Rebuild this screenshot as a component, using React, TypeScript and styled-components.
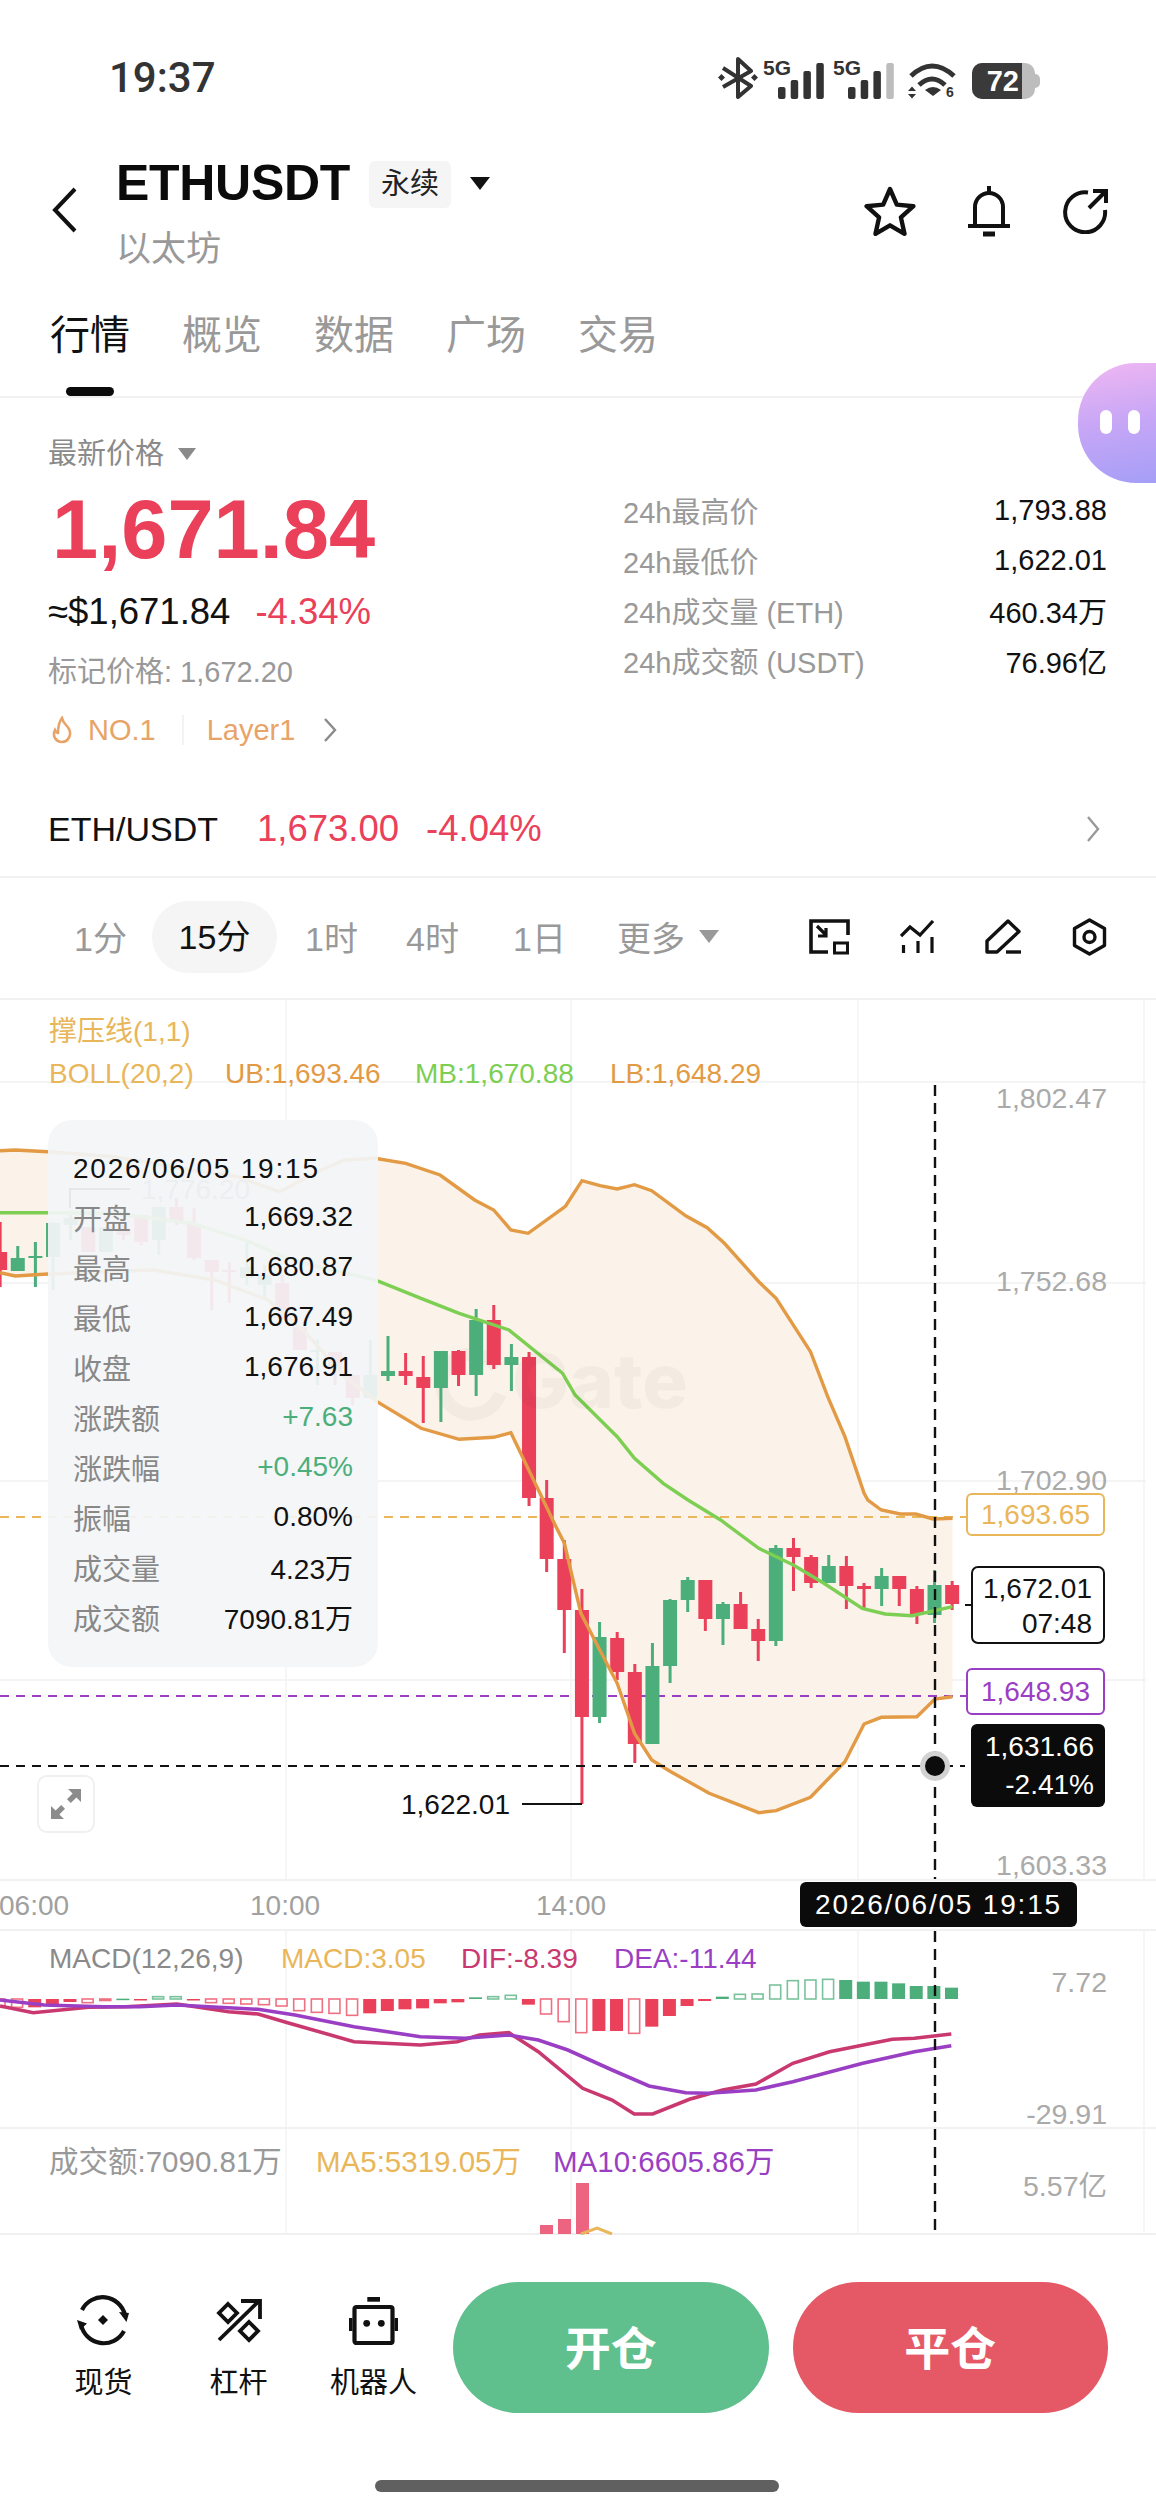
import React from "react";
import styled, { createGlobalStyle } from "styled-components";

const RED = "#ea405a";
const GREEN = "#4cae7b";
const GOLD = "#e9b659";
const ORANGE = "#e39a45";
const LIME = "#7ccf52";
const PURPLE = "#9a3fc4";
const PINK = "#c9396f";

const GlobalStyle = createGlobalStyle`
  html, body {
    margin: 0;
    padding: 0;
    background: #fff;
  }
  body {
    font-family: "Liberation Sans", "Noto Sans CJK SC", sans-serif;
    color: #111;
  }
  * {
    box-sizing: border-box;
  }
`;

// candles: [index, up?, wickTop, bodyTop, bodyBottom, wickBottom]
type Candle = [number, boolean, number, number, number, number];
const candles: Candle[] = [
  [-22, false, 1222, 1252, 1270, 1287],
  [-21, true, 1246, 1258, 1271, 1271],
  [-20, true, 1242, 1256, 1258, 1287],
  [-19, true, 1222, 1223, 1257, 1290],
  [-18, true, 1215, 1218, 1225, 1240],
  [-17, false, 1227, 1227, 1252, 1252],
  [-16, true, 1227, 1227, 1252, 1252],
  [-15, false, 1225, 1230, 1235, 1240],
  [-14, false, 1215, 1215, 1242, 1245],
  [-13, true, 1207, 1207, 1240, 1255],
  [-12, false, 1198, 1207, 1221, 1225],
  [-11, false, 1208, 1224, 1258, 1260],
  [-10, false, 1260, 1260, 1272, 1310],
  [-9, false, 1262, 1270, 1272, 1303],
  [-8, true, 1240, 1267, 1278, 1285],
  [-7, true, 1265, 1275, 1285, 1300],
  [-6, false, 1275, 1283, 1310, 1320],
  [-5, false, 1327, 1327, 1350, 1350],
  [-4, true, 1340, 1350, 1352, 1385],
  [-3, false, 1352, 1352, 1370, 1385],
  [-2, false, 1375, 1375, 1398, 1405],
  [-1, true, 1340, 1375, 1398, 1398],
  [0, true, 1336, 1371, 1376, 1381],
  [1, false, 1353, 1371, 1376, 1385],
  [2, false, 1356, 1377, 1388, 1423],
  [3, true, 1351, 1351, 1388, 1422],
  [4, false, 1350, 1351, 1375, 1386],
  [5, true, 1309, 1320, 1375, 1396],
  [6, false, 1305, 1320, 1365, 1369],
  [7, true, 1344, 1357, 1365, 1391],
  [8, false, 1352, 1357, 1498, 1506],
  [9, false, 1480, 1498, 1559, 1572],
  [10, false, 1540, 1559, 1610, 1653],
  [11, false, 1589, 1610, 1717, 1804],
  [12, true, 1622, 1637, 1717, 1723],
  [13, false, 1632, 1638, 1672, 1680],
  [14, false, 1664, 1672, 1744, 1763],
  [15, true, 1643, 1666, 1744, 1744],
  [16, true, 1599, 1600, 1666, 1683],
  [17, true, 1577, 1580, 1600, 1612],
  [18, false, 1580, 1580, 1619, 1631],
  [19, true, 1602, 1604, 1619, 1645],
  [20, false, 1592, 1604, 1629, 1629],
  [21, false, 1619, 1629, 1641, 1661],
  [22, true, 1545, 1548, 1641, 1646],
  [23, false, 1538, 1548, 1557, 1591],
  [24, false, 1555, 1557, 1583, 1588],
  [25, true, 1555, 1566, 1583, 1583],
  [26, false, 1556, 1566, 1586, 1609],
  [27, false, 1583, 1586, 1589, 1608],
  [28, true, 1568, 1576, 1589, 1606],
  [29, false, 1576, 1576, 1589, 1606],
  [30, false, 1586, 1589, 1615, 1624],
  [31, true, 1570, 1585, 1615, 1623],
  [32, false, 1581, 1585, 1604, 1610],
];
const candleX = (i: number) => 388 + 17.63 * i;

type Pt = [number, number];
// points read off the reference at its zoomed scale
const main = (ox: number, oy: number, pts: Pt[]): Pt[] =>
  pts.map(([v, w]) => [ox + v / 2.613, oy + w / 3]);
const wide = (pts: Pt[]): Pt[] => pts.map(([v, w]) => [v / 1.356, 1900 + w / 3]);
const toPath = (pts: Pt[]) =>
  pts.map(([x, y]) => `${x.toFixed(1)},${y.toFixed(1)}`).join(" ");

const upper: Pt[] = [
  ...main(0, 1000, [
    [0, 452], [40, 450], [125, 455], [300, 470], [500, 510], [620, 530], [730, 575],
    [840, 510], [900, 480], [980, 475], [1060, 490], [1150, 525], [1240, 600],
    [1290, 630], [1335, 690], [1380, 700], [1470, 625],
  ]),
  ...main(556, 1000, [
    [25, 618], [68, 542], [115, 557], [160, 567], [205, 554], [250, 572], [340, 648],
    [395, 683], [440, 730], [530, 845], [575, 895], [665, 1055], [710, 1190],
    [755, 1310], [805, 1480],
  ]),
  ...main(556, 1500, [[815, 0], [850, 30], [900, 42], [940, 42], [985, 57], [1036, 55]]),
];
const middle: Pt[] = [
  ...main(0, 1000, [
    [0, 638], [125, 638], [300, 640], [500, 670], [640, 720], [760, 780], [985, 842],
    [1100, 895], [1200, 940], [1330, 990], [1470, 1120],
  ]),
  ...main(556, 1000, [[50, 1185], [160, 1310], [205, 1375], [280, 1450]]),
  ...main(556, 1500, [
    [345, 0], [430, 60], [530, 145], [620, 195], [700, 250], [800, 325], [860, 342],
    [930, 347], [990, 332], [1036, 320],
  ]),
];
const lower: Pt[] = [
  ...main(0, 1000, [
    [0, 818], [40, 828], [125, 822], [400, 810], [560, 840], [700, 900], [800, 1000],
    [900, 1130], [985, 1205], [1100, 1285], [1200, 1318], [1290, 1312], [1335, 1298],
  ]),
  ...main(556, 1500, [
    [0, 80], [22, 130], [65, 340], [110, 440], [160, 550], [205, 700], [250, 780],
    [300, 815], [400, 880], [530, 938], [575, 932], [665, 892], [755, 785], [805, 672],
    [850, 652], [943, 650], [990, 597], [1036, 590],
  ]),
];

const dif = wide([
  [0, 318], [45, 338], [120, 322], [170, 320], [240, 312], [310, 335], [350, 342],
  [390, 368], [480, 425], [570, 435], [620, 425], [650, 405], [690, 398], [730, 455],
  [790, 565], [830, 600], [860, 642], [885, 642], [935, 598], [980, 570], [1025, 552],
  [1075, 490], [1125, 455], [1210, 418], [1240, 415], [1290, 402],
]);
const dea = wide([
  [0, 300], [60, 315], [140, 320], [190, 320], [240, 315], [350, 328], [400, 345],
  [480, 380], [570, 410], [630, 415], [690, 405], [730, 420], [770, 450], [830, 510],
  [880, 558], [930, 578], [960, 580], [1025, 570], [1075, 545], [1170, 490],
  [1240, 455], [1290, 437],
]);

// macd bars right to left: [end in zoomed rows, solid?]
const macdBars: [number, boolean][] = [
  [263, true], [258, true], [258, true], [250, true], [245, true], [245, true], [240, true],
  [238, false], [240, false], [242, false], [255, false], [282, false], [283, false], [290, true],
  [303, true], [318, true], [348, true], [380, true], [400, false], [393, true], [393, true],
  [398, false], [365, false], [342, false], [314, true], [286, false], [290, false], [292, true],
  [307, true], [310, true], [325, true], [328, true], [333, true], [340, true], [346, false],
  [340, false], [337, false], [332, false], [318, false], [314, false], [312, false], [310, false],
  [308, false], [299, true], [290, false], [290, false], [297, true], [296, true], [298, false],
  [308, false], [306, true], [312, true], [322, true], [322, false], [322, false],
];

const ChartDrawing = () => (
  <ChartSvg viewBox="0 1000 1156 1235">
    {[286, 571, 858, 1144].map((x) => (
      <line key={x} x1={x} x2={x} y1={1000} y2={2234} stroke="#f3f3f3" strokeWidth="1.5" />
    ))}
    {[1082, 1283, 1481, 1680].map((y) => (
      <line key={y} x1={0} x2={1146} y1={y} y2={y} stroke="#f1f1f1" strokeWidth="1.5" />
    ))}

    <polygon points={toPath([...upper, ...[...lower].reverse()])} fill="#fbf2e9" />

    {/* watermark ring */}
    <path
      d="M497 1368a30 30 0 1 0 3 26"
      fill="none"
      stroke="#000"
      strokeOpacity="0.03"
      strokeWidth="13"
    />

    <line x1="0" x2="966" y1="1517" y2="1517" stroke={GOLD} strokeWidth="2" strokeDasharray="9 7" />
    <line x1="0" x2="966" y1="1696" y2="1696" stroke={PURPLE} strokeWidth="2" strokeDasharray="9 7" />

    {candles.map(([i, up, wt, bt, bb, wb]) => {
      const x = candleX(i);
      const fill = up ? GREEN : RED;
      return (
        <g key={i}>
          <rect x={x - 1.5} y={wt} width="3" height={wb - wt} fill={fill} />
          <rect x={x - 7} y={bt} width="14" height={Math.max(bb - bt, 2)} fill={fill} />
        </g>
      );
    })}

    <polyline points={toPath(upper)} fill="none" stroke={ORANGE} strokeWidth="3.4" />
    <polyline points={toPath(middle)} fill="none" stroke={LIME} strokeWidth="3.4" />
    <polyline points={toPath(lower)} fill="none" stroke={ORANGE} strokeWidth="3.4" />

    {/* max mark under the tooltip */}
    <path d="M70 1208v-19h60" fill="none" stroke="#333" strokeWidth="2" />
    {/* min mark */}
    <path d="M522 1804h60" fill="none" stroke="#111" strokeWidth="2" />
    <path d="M965 1605h6" stroke="#111" strokeWidth="2" />

    {/* macd */}
    {macdBars.map(([end, solid], k) => {
      const x = 951.5 - 17.63 * k;
      const y0 = 1999;
      const y1 = 1900 + end / 3;
      const top = Math.min(y0, y1);
      const h = Math.max(Math.abs(y1 - y0), 1.5);
      const color = y1 < y0 ? GREEN : RED;
      return solid ? (
        <rect key={k} x={x - 6.5} y={top} width="13" height={h} fill={color} />
      ) : (
        <rect
          key={k}
          x={x - 5.5}
          y={top}
          width="11"
          height={h}
          fill="#fff"
          stroke={color}
          strokeOpacity="0.75"
          strokeWidth="1.6"
        />
      );
    })}
    <polyline points={toPath(dif)} fill="none" stroke={PINK} strokeWidth="3.6" />
    <polyline points={toPath(dea)} fill="none" stroke={PURPLE} strokeWidth="3.6" />

    {/* volume */}
    <rect x="540" y="2225" width="13" height="9" fill="#ec6480" />
    <rect x="558" y="2219" width="13" height="15" fill="#ec6480" />
    <rect x="576" y="2183" width="13" height="51" fill="#ec6480" />
    <polyline points="581,2234 597,2228 612,2234" fill="none" stroke={GOLD} strokeWidth="3" />

    {/* crosshair */}
    <line x1="0" x2="965" y1="1766" y2="1766" stroke="#111" strokeWidth="2.2" strokeDasharray="9 7" />
    <line x1="935" x2="935" y1="1085" y2="2234" stroke="#111" strokeWidth="2.4" strokeDasharray="11 7" />
    <circle cx="935" cy="1766" r="15" fill="#d2d2d2" />
    <circle cx="935" cy="1766" r="10" fill="#0c0c0c" />
  </ChartSvg>
);

const BackIcon = () => (
  <svg width="26" height="46" viewBox="0 0 26 46" fill="none" stroke="#111" strokeWidth="4">
    <path d="M23 2 3 23l20 21" />
  </svg>
);
const StarIcon = () => (
  <svg width="52" height="50" viewBox="0 0 52 50" fill="none" stroke="#111" strokeWidth="4.4" strokeLinejoin="round">
    <path d="M26 3l6.8 15.6 16.6 1.600-12.500 11.200 3.600 16.400L26 39.300 11.500 47.800l3.600-16.400L2.600 20.200l16.600-1.600z" />
  </svg>
);
const BellIcon = () => (
  <svg width="46" height="52" viewBox="0 0 46 52" fill="none" stroke="#111" strokeWidth="4">
    <path d="M23 1v6M9 41V22a14 14 0 0 1 28 0v19M2 41h42" />
    <path d="M17 49h12" strokeWidth="5" />
  </svg>
);
const ShareIcon = () => (
  <svg width="46" height="46" viewBox="0 0 46 46" fill="none" stroke="#111" strokeWidth="4">
    <path d="M26 4.500A20 20 0 1 0 43 22" />
    <path d="M27 20 43 4M31 3h13v12" />
  </svg>
);
const Caret = styled.i<{ $size: number; $color: string }>`
  display: inline-block;
  width: 0;
  height: 0;
  border-left: ${(p) => p.$size}px solid transparent;
  border-right: ${(p) => p.$size}px solid transparent;
  border-top: ${(p) => p.$size * 1.35}px solid ${(p) => p.$color};
`;
const BluetoothIcon = () => (
  <svg width="40" height="42" viewBox="0 0 40 42" fill="none" stroke="#333" strokeWidth="4">
    <path d="M5 11 33 29 20 40V2l13 12L5 30" strokeLinejoin="round" />
    <path d="M3.500 17l3.500 3.500L3.500 24 0 20.500zM36.500 17l3.500 3.500-3.500 3.500-3.500-3.500z" fill="#333" stroke="none" />
  </svg>
);
const SignalIcon = ({ faded }: { faded?: boolean }) => (
  <svg width="46" height="36" viewBox="0 0 46 36">
    <rect x="0" y="24" width="7.500" height="12" rx="2" fill="#333" />
    <rect x="12.700" y="17" width="7.500" height="19" rx="2" fill="#333" />
    <rect x="25.400" y="8" width="7.500" height="28" rx="2" fill="#333" />
    <rect x="38.300" y="0" width="7.500" height="36" rx="2" fill={faded ? "#bdbdbd" : "#333"} />
  </svg>
);
const WifiIcon = () => (
  <svg width="50" height="36" viewBox="0 0 50 36" fill="none" stroke="#333" strokeWidth="5">
    <path d="M3 13Q24-7 46 13M11 22Q24 10 37 22" />
    <path d="M17 27q8-6 16 0l-8 6z" fill="#333" stroke="none" />
    <path d="M0 28l4-4.500 4 4.500zM0 31l4 4.500 4-4.500z" fill="#333" stroke="none" />
    <text x="38" y="34" fontSize="14" fontWeight="700" fill="#333" stroke="none">6</text>
  </svg>
);
const FlameIcon = () => (
  <svg width="24" height="28" viewBox="0 0 24 28" fill="none" stroke="#e8a468" strokeWidth="2.600">
    <path d="M12 2c1 5 4 6 7 11 3 6-1 13-7 13S2 20 5 14c1 2 2 3 3 3 0-5 1-11 4-15z" />
  </svg>
);
const Chevron = ({ color, h }: { color: string; h: number }) => (
  <svg width="14" height={h} viewBox={`0 0 14 ${h}`} fill="none" stroke={color} strokeWidth="2.400">
    <path d={`M2 1 12 ${h / 2} 2 ${h - 1}`} />
  </svg>
);
const ChartTypeIcon = () => (
  <svg width="41" height="36" viewBox="0 0 41 36" fill="none" stroke="#111" strokeWidth="3.600">
    <path d="M39 16V2H2v31h17" />
    <rect x="25.500" y="24" width="13" height="10" strokeWidth="3" />
    <path d="M8 7l9 9M17 9v8H9" strokeWidth="3.200" />
  </svg>
);
const IndicatorIcon = () => (
  <svg width="35" height="34" viewBox="0 0 35 34" fill="none" stroke="#111" strokeWidth="3.200">
    <path d="M1 16l9-9 10 8L33 1" />
    <path d="M3.500 25v8M18 21v12M32 17v16" />
  </svg>
);
const PenIcon = () => (
  <svg width="37" height="35" viewBox="0 0 37 35" fill="none" stroke="#111" strokeWidth="3.400" strokeLinejoin="round">
    <path d="M23 2l11 10.500L12 33H2V22z" />
    <path d="M21 33h15" />
  </svg>
);
const SettingsIcon = () => (
  <svg width="35" height="38" viewBox="0 0 35 38" fill="none" stroke="#111" strokeWidth="3.400" strokeLinejoin="round">
    <path d="M17.500 2l15 8.500v17l-15 8.500-15-8.500v-17z" />
    <circle cx="17.500" cy="19" r="5.500" />
  </svg>
);
const ExpandIcon = () => (
  <svg width="30" height="30" viewBox="0 0 30 30" fill="#8c8c8c">
    <path d="M17 0h13v13l-4.600-4.600-5.600 5.600-3.800-3.800 5.600-5.600zM13 30H0V17l4.600 4.600 5.600-5.600 3.800 3.800-5.600 5.600z" />
  </svg>
);
const SpotIcon = () => (
  <svg width="54" height="54" viewBox="0 0 54 54" fill="none" stroke="#111" strokeWidth="4.200">
    <path d="M5 16A23 23 0 0 1 48 21M47 37A23 23 0 0 1 4 30" />
    <path d="M42 18l10 1-2.500 9zM0 26l10 3.500-7 6.500z" fill="#111" stroke="none" />
    <path d="M26 21l5 5-5 5-5-5z" fill="#111" stroke="none" />
  </svg>
);
const LeverIcon = () => (
  <svg width="46" height="46" viewBox="0 0 46 46" fill="none" stroke="#111" strokeWidth="3.800">
    <path d="M12 6l9 9-9 9-9-9zM33 24l9 9-9 9-9-9z" />
    <path d="M3 42 43 3" />
    <path d="M25 3h19v18" />
  </svg>
);
const RobotIcon = () => (
  <svg width="49" height="48" viewBox="0 0 49 48" fill="none" stroke="#111" strokeWidth="4.200">
    <rect x="18.300" y="0" width="12.700" height="4.700" fill="#111" stroke="none" />
    <rect x="5.500" y="10" width="38" height="36" rx="2" />
    <rect x="0" y="21" width="3.500" height="13" fill="#111" stroke="none" />
    <rect x="45.500" y="21" width="3.500" height="13" fill="#111" stroke="none" />
    <circle cx="17.700" cy="26.300" r="3.400" fill="#111" stroke="none" />
    <circle cx="32.300" cy="26.300" r="3.400" fill="#111" stroke="none" />
  </svg>
);

const stats = [
  ["24h最高价", "1,793.88"],
  ["24h最低价", "1,622.01"],
  ["24h成交量 (ETH)", "460.34万"],
  ["24h成交额 (USDT)", "76.96亿"],
];
const tooltipRows: [string, string, boolean?][] = [
  ["开盘", "1,669.32"],
  ["最高", "1,680.87"],
  ["最低", "1,667.49"],
  ["收盘", "1,676.91"],
  ["涨跌额", "+7.63", true],
  ["涨跌幅", "+0.45%", true],
  ["振幅", "0.80%"],
  ["成交量", "4.23万"],
  ["成交额", "7090.81万"],
];

export default function App() {
  return (
    <Page>
      <GlobalStyle />
      <StatusBar>
        <Clock>19:37</Clock>
        <StatusIcons>
          <BluetoothIcon />
          <NetGroup>
            <NetLabel>5G</NetLabel>
            <SignalIcon />
          </NetGroup>
          <NetGroup>
            <NetLabel>5G</NetLabel>
            <SignalIcon faded />
          </NetGroup>
          <WifiIcon />
          <Battery>
            <BatteryLevel>72</BatteryLevel>
          </Battery>
        </StatusIcons>
      </StatusBar>

      <Header>
        <BackSlot>
          <BackIcon />
        </BackSlot>
        <TitleBlock>
          <TitleRow>
            <Symbol>ETHUSDT</Symbol>
            <TypeBadge>永续</TypeBadge>
            <Caret $size={10} $color="#111" />
          </TitleRow>
          <CoinName>以太坊</CoinName>
        </TitleBlock>
        <HeaderActions>
          <StarIcon />
          <BellIcon />
          <ShareIcon />
        </HeaderActions>
      </Header>

      <Tabs>
        <Tab $active>行情</Tab>
        <Tab>概览</Tab>
        <Tab>数据</Tab>
        <Tab>广场</Tab>
        <Tab>交易</Tab>
      </Tabs>

      <Mascot>
        <MascotEye />
        <MascotEye />
      </Mascot>

      <PriceSection>
        <PriceColumn>
          <PriceLabel>
            最新价格 <Caret $size={9} $color="#8a8a8a" />
          </PriceLabel>
          <BigPrice>1,671.84</BigPrice>
          <FiatRow>
            <span>≈$1,671.84</span>
            <Down>-4.34%</Down>
          </FiatRow>
          <MarkPrice>标记价格: 1,672.20</MarkPrice>
          <TagRow>
            <FlameIcon />
            <TagText>NO.1</TagText>
            <TagDivider />
            <TagText>Layer1</TagText>
            <Chevron color="#8a8a8a" h={24} />
          </TagRow>
        </PriceColumn>
        <StatList>
          {stats.map(([label, value]) => (
            <StatRow key={label}>
              <StatLabel>{label}</StatLabel>
              <StatValue>{value}</StatValue>
            </StatRow>
          ))}
        </StatList>
      </PriceSection>

      <SpotRow>
        <SpotName>ETH/USDT</SpotName>
        <Down>1,673.00</Down>
        <Down>-4.04%</Down>
        <SpotChevron>
          <Chevron color="#9a9a9a" h={26} />
        </SpotChevron>
      </SpotRow>

      <IntervalBar>
        <IntervalItem $w={52} $gap={25}>1分</IntervalItem>
        <IntervalPill>15分</IntervalPill>
        <IntervalItem $w={52} $gap={49}>1时</IntervalItem>
        <IntervalItem $w={54} $gap={49}>4时</IntervalItem>
        <IntervalItem $w={52} $gap={53}>1日</IntervalItem>
        <MoreItem>
          更多 <Caret $size={10} $color="#999" />
        </MoreItem>
        <ChartTools>
          <ChartTypeIcon />
          <IndicatorIcon />
          <PenIcon />
          <SettingsIcon />
        </ChartTools>
      </IntervalBar>

      <Chart>
        <ChartDrawing />

        <MainPane>
          <Legend>
            <LegendItem $color={GOLD}>撑压线(1,1)</LegendItem>
          </Legend>
          <BollLegend>
            <LegendItem $color={GOLD} $width={176}>BOLL(20,2)</LegendItem>
            <LegendItem $color={ORANGE} $width={190}>UB:1,693.46</LegendItem>
            <LegendItem $color={LIME} $width={195}>MB:1,670.88</LegendItem>
            <LegendItem $color={ORANGE}>LB:1,648.29</LegendItem>
          </BollLegend>

          <Watermark>Gate</Watermark>
          <MaxMark>1,776.20</MaxMark>

          <Tooltip>
            <TooltipDate>2026/06/05 19:15</TooltipDate>
            {tooltipRows.map(([label, value, up]) => (
              <TooltipRow key={label}>
                <TooltipLabel>{label}</TooltipLabel>
                <TooltipValue $up={up}>{value}</TooltipValue>
              </TooltipRow>
            ))}
          </Tooltip>

          <AxisLabel $y={98}>1,802.47</AxisLabel>
          <AxisLabel $y={281}>1,752.68</AxisLabel>
          <AxisLabel $y={480}>1,702.90</AxisLabel>
          <AxisLabel $y={865}>1,603.33</AxisLabel>

          <LineTag $y={493} $h={43} $color={GOLD}>1,693.65</LineTag>
          <LastPriceTag>
            <div>1,672.01</div>
            <div>07:48</div>
          </LastPriceTag>
          <LineTag $y={668} $h={47} $color={PURPLE}>1,648.93</LineTag>
          <CrossPriceTag>
            <div>1,631.66</div>
            <div>-2.41%</div>
          </CrossPriceTag>

          <ExpandButton>
            <ExpandIcon />
          </ExpandButton>
          <MinMark>1,622.01</MinMark>
        </MainPane>

        <TimeAxis>
          <TimeLabel $x={-1}>06:00</TimeLabel>
          <TimeLabel $x={250}>10:00</TimeLabel>
          <TimeLabel $x={536}>14:00</TimeLabel>
          <CrossTime>2026/06/05 19:15</CrossTime>
        </TimeAxis>

        <MacdPane>
          <Legend>
            <LegendItem $color="#8a8a8a" $width={232}>MACD(12,26,9)</LegendItem>
            <LegendItem $color={GOLD} $width={180}>MACD:3.05</LegendItem>
            <LegendItem $color={PINK} $width={153}>DIF:-8.39</LegendItem>
            <LegendItem $color={PURPLE}>DEA:-11.44</LegendItem>
          </Legend>
          <AxisLabel $y={51}>7.72</AxisLabel>
          <AxisLabel $y={183}>-29.91</AxisLabel>
        </MacdPane>

        <VolumePane>
          <VolumeLegend>
            <LegendItem $color="#999" $width={267}>成交额:7090.81万</LegendItem>
            <LegendItem $color={GOLD} $width={237}>MA5:5319.05万</LegendItem>
            <LegendItem $color={PURPLE}>MA10:6605.86万</LegendItem>
          </VolumeLegend>
          <AxisLabel $y={57}>5.57亿</AxisLabel>
        </VolumePane>
      </Chart>

      <BottomBar>
        <ShortcutGroup>
          <Shortcut>
            <ShortcutIcon>
              <SpotIcon />
            </ShortcutIcon>
            <span>现货</span>
          </Shortcut>
          <Shortcut>
            <ShortcutIcon>
              <LeverIcon />
            </ShortcutIcon>
            <span>杠杆</span>
          </Shortcut>
          <Shortcut>
            <ShortcutIcon>
              <RobotIcon />
            </ShortcutIcon>
            <span>机器人</span>
          </Shortcut>
        </ShortcutGroup>
        <TradeButton $color="#5fbf8d">开仓</TradeButton>
        <TradeButton $color="#e55966">平仓</TradeButton>
      </BottomBar>
      <HomeBar />
    </Page>
  );
}

const Page = styled.div`
  position: relative;
  width: 1156px;
  height: 2510px;
  overflow: hidden;
  background: #fff;
`;

const StatusBar = styled.div`
  display: flex;
  align-items: center;
  justify-content: space-between;
  height: 154px;
  padding: 0 116px 0 109px;
`;
const Clock = styled.div`
  font-family: "Roboto", sans-serif;
  font-size: 42px;
  font-weight: 500;
  color: #333;
`;
const StatusIcons = styled.div`
  display: flex;
  align-items: flex-end;
  gap: 9px;
  color: #333;
  margin-top: 2px;
  > svg:nth-child(1) {
    margin-right: -4px;
  }
  > svg:nth-child(4) {
    margin: 0 5px;
  }
`;
const NetGroup = styled.div`
  position: relative;
  width: 61px;
  height: 38px;
  display: flex;
  align-items: flex-end;
  justify-content: flex-end;
`;
const NetLabel = styled.span`
  position: absolute;
  left: 0;
  top: -4px;
  font-size: 21px;
  font-weight: 700;
  line-height: 21px;
`;
const Battery = styled.div`
  position: relative;
  width: 63px;
  height: 36px;
  border-radius: 10px;
  background: #bdbdbd;
  margin-right: 5px;
  &::after {
    content: "";
    position: absolute;
    left: 63px;
    top: 11px;
    width: 5px;
    height: 14px;
    border-radius: 0 5px 5px 0;
    background: #bdbdbd;
  }
`;
const BatteryLevel = styled.div`
  width: 50px;
  height: 100%;
  padding-right: 3px;
  border-radius: 10px 0 0 10px;
  background: #3a3a3a;
  color: #fff;
  font-size: 29px;
  font-weight: 700;
  line-height: 36px;
  text-align: right;
`;

const Header = styled.div`
  display: flex;
  align-items: flex-start;
  height: 130px;
  padding: 1px 48px 0 0;
`;
const BackSlot = styled.div`
  width: 116px;
  padding: 32px 0 0 52px;
  display: flex;
`;
const TitleBlock = styled.div`
  display: flex;
  flex-direction: column;
  flex: 1;
  gap: 18px;
`;
const TitleRow = styled.div`
  display: flex;
  align-items: center;
  gap: 19px;
`;
const Symbol = styled.div`
  font-size: 50px;
  font-weight: 700;
  line-height: 56px;
  letter-spacing: -0.3px;
  color: #0b0b0b;
`;
const TypeBadge = styled.div`
  font-size: 29px;
  line-height: 47px;
  padding: 0 12px;
  margin-top: 2px;
  background: #f5f5f5;
  border-radius: 6px;
  color: #222;
`;
const CoinName = styled.div`
  font-size: 35px;
  line-height: 40px;
  color: #999;
`;
const HeaderActions = styled.div`
  display: flex;
  align-items: center;
  gap: 50px;
  padding-top: 30px;
`;

const Tabs = styled.div`
  display: flex;
  gap: 52px;
  height: 114px;
  padding: 23px 0 0 50px;
  border-bottom: 2px solid #f1f1f1;
`;
const Tab = styled.div<{ $active?: boolean }>`
  position: relative;
  font-size: 40px;
  line-height: 56px;
  color: ${(p) => (p.$active ? "#111" : "#999")};
  &::after {
    content: "";
    display: ${(p) => (p.$active ? "block" : "none")};
    position: absolute;
    left: 16px;
    top: 80px;
    width: 48px;
    height: 9px;
    border-radius: 5px;
    background: #0b0b0b;
  }
`;

const Mascot = styled.div`
  position: absolute;
  left: 1078px;
  top: 363px;
  width: 90px;
  height: 120px;
  padding: 47px 0 0 22px;
  display: flex;
  gap: 16px;
  border-radius: 58px 0 0 58px;
  background: linear-gradient(170deg, #f0b7f2 0%, #c6a6f6 50%, #a49ef6 100%);
`;
const MascotEye = styled.span`
  width: 12px;
  height: 24px;
  border-radius: 6px;
  background: #fff;
`;

const PriceSection = styled.div`
  display: flex;
  justify-content: space-between;
  height: 398px;
  padding: 38px 49px 0 48px;
`;
const PriceColumn = styled.div`
  display: flex;
  flex-direction: column;
`;
const PriceLabel = styled.div`
  display: flex;
  align-items: center;
  gap: 14px;
  font-size: 29px;
  line-height: 36px;
  color: #8a8a8a;
`;
const BigPrice = styled.div`
  margin: 8px 0 0 4px;
  font-size: 83px;
  font-weight: 700;
  line-height: 100px;
  color: ${RED};
`;
const FiatRow = styled.div`
  display: flex;
  gap: 25px;
  margin-top: 11px;
  font-size: 36.5px;
  line-height: 42px;
`;
const Down = styled.span`
  color: ${RED};
  font-size: 36.5px;
`;
const MarkPrice = styled.div`
  margin-top: 21px;
  font-size: 29px;
  line-height: 36px;
  color: #999;
`;
const TagRow = styled.div`
  display: flex;
  align-items: center;
  margin-top: 23px;
  padding-left: 2px;
  height: 34px;
  > svg:last-child {
    margin-left: 28px;
  }
  > svg:first-child {
    margin-right: 14px;
  }
`;
const TagText = styled.span`
  font-size: 29px;
  color: #e8a468;
`;
const TagDivider = styled.i`
  width: 2px;
  height: 30px;
  margin: 0 23px 0 26px;
  background: #f3f3f3;
`;
const StatList = styled.div`
  display: flex;
  flex-direction: column;
  width: 484px;
  margin-top: 49px;
`;
const StatRow = styled.div`
  display: flex;
  align-items: center;
  justify-content: space-between;
  height: 50px;
`;
const StatLabel = styled.span`
  font-size: 29px;
  color: #999;
`;
const StatValue = styled.span`
  font-size: 29px;
  color: #111;
`;

const SpotRow = styled.div`
  display: flex;
  align-items: center;
  height: 82px;
  padding: 0 56px 14px 48px;
  border-bottom: 2px solid #f1f1f1;
  > span:nth-child(2) {
    margin-left: 39px;
    margin-right: 27px;
  }
`;
const SpotName = styled.span`
  font-size: 34px;
  color: #111;
`;
const SpotChevron = styled.span`
  margin-left: auto;
  display: flex;
`;

const IntervalBar = styled.div`
  display: flex;
  align-items: center;
  height: 122px;
  border-bottom: 2px solid #f1f1f1;
  padding: 0 49px 3px 0;
`;
const IntervalItem = styled.div<{ $w: number; $gap: number }>`
  width: ${(p) => p.$w}px;
  margin-left: ${(p) => p.$gap}px;
  font-size: 34px;
  color: #999;
  white-space: nowrap;
  &:first-child {
    margin-left: 74px;
  }
`;
const IntervalPill = styled.div`
  width: 125px;
  height: 72px;
  margin-left: 26px;
  margin-right: -21px;
  border-radius: 36px;
  background: #f5f5f5;
  font-size: 34px;
  line-height: 72px;
  text-align: center;
  color: #111;
`;
const MoreItem = styled.div`
  display: flex;
  align-items: center;
  gap: 14px;
  margin-left: 52px;
  font-size: 34px;
  color: #999;
`;
const ChartTools = styled.div`
  display: flex;
  align-items: center;
  gap: 50px;
  margin-left: auto;
`;

const Chart = styled.div`
  position: relative;
  height: 1235px;
  border-bottom: 2px solid #f0f0f0;
`;
const ChartSvg = styled.svg`
  position: absolute;
  inset: 0;
  width: 1156px;
  height: 1235px;
`;
const MainPane = styled.div`
  position: relative;
  height: 881px;
  padding-top: 12px;
  border-bottom: 2px solid #f1f1f1;
`;
const MacdPane = styled.div`
  position: relative;
  height: 198px;
  padding-top: 8px;
  border-bottom: 2px solid #f1f1f1;
`;
const VolumePane = styled.div`
  position: relative;
  height: 106px;
  padding-top: 13px;
`;
const Legend = styled.div`
  position: relative;
  display: flex;
  height: 39px;
  padding-left: 49px;
  font-size: 28px;
  line-height: 39px;
`;
const BollLegend = styled(Legend)`
  margin-top: 3px;
`;
const VolumeLegend = styled(Legend)`
  font-size: 29.5px;
`;
const LegendItem = styled.span<{ $color: string; $width?: number }>`
  color: ${(p) => p.$color};
  white-space: nowrap;
  ${(p) => (p.$width ? `width: ${p.$width}px;` : "")}
`;

const Watermark = styled.div`
  position: absolute;
  left: 512px;
  top: 340px;
  font-family: "Inter", sans-serif;
  font-size: 76px;
  font-weight: 800;
  line-height: 80px;
  color: rgba(0, 0, 0, 0.03);
`;
const MaxMark = styled.div`
  position: absolute;
  left: 141px;
  top: 172px;
  font-size: 28px;
  line-height: 36px;
  color: #888;
`;
const Tooltip = styled.div`
  position: absolute;
  left: 48px;
  top: 120px;
  width: 330px;
  height: 547px;
  padding: 31px 25px 0;
  border-radius: 24px;
  background: rgba(243, 245, 247, 0.93);
`;
const TooltipDate = styled.div`
  height: 41px;
  font-size: 28px;
  line-height: 36px;
  letter-spacing: 1.8px;
  color: #111;
  white-space: nowrap;
`;
const TooltipRow = styled.div`
  display: flex;
  align-items: center;
  justify-content: space-between;
  height: 50px;
`;
const TooltipLabel = styled.span`
  font-size: 29px;
  color: #888;
`;
const TooltipValue = styled.span<{ $up?: boolean }>`
  font-size: 28px;
  color: ${(p) => (p.$up ? GREEN : "#111")};
`;
const AxisLabel = styled.div<{ $y: number }>`
  position: absolute;
  right: 49px;
  top: ${(p) => p.$y - 18}px;
  font-size: 28.5px;
  line-height: 36px;
  color: #aaa;
`;
const LineTag = styled.div<{ $y: number; $h: number; $color: string }>`
  position: absolute;
  left: 966px;
  top: ${(p) => p.$y}px;
  width: 139px;
  height: ${(p) => p.$h}px;
  border: 2px solid ${(p) => p.$color};
  border-radius: 6px;
  background: #fff;
  color: ${(p) => p.$color};
  font-size: 28px;
  line-height: ${(p) => p.$h - 4}px;
  text-align: center;
`;
const LastPriceTag = styled.div`
  position: absolute;
  left: 971px;
  top: 566px;
  width: 134px;
  height: 78px;
  padding: 3px 11px 0 0;
  border: 2px solid #111;
  border-radius: 7px;
  background: #fff;
  font-size: 28px;
  line-height: 35px;
  text-align: right;
`;
const CrossPriceTag = styled.div`
  position: absolute;
  left: 971px;
  top: 724px;
  width: 134px;
  height: 83px;
  padding: 4px 11px 0 0;
  border-radius: 6px;
  background: #0b0b0b;
  color: #fff;
  font-size: 28px;
  line-height: 38px;
  text-align: right;
`;
const ExpandButton = styled.div`
  position: absolute;
  left: 37px;
  top: 775px;
  display: flex;
  align-items: center;
  justify-content: center;
  width: 58px;
  height: 58px;
  border: 2px solid #f0f0f0;
  border-radius: 10px;
  background: #fff;
`;
const MinMark = styled.div`
  position: absolute;
  left: 401px;
  top: 787px;
  font-size: 28px;
  line-height: 36px;
  color: #111;
`;

const TimeAxis = styled.div`
  position: relative;
  height: 50px;
  background: #fff;
  border-bottom: 2px solid #f1f1f1;
`;
const TimeLabel = styled.span<{ $x: number }>`
  position: absolute;
  left: ${(p) => p.$x}px;
  top: 7px;
  font-size: 28px;
  line-height: 36px;
  color: #a0a0a0;
`;
const CrossTime = styled.div`
  position: absolute;
  left: 800px;
  top: 1px;
  width: 277px;
  height: 45px;
  border-radius: 6px;
  background: #0b0b0b;
  color: #fff;
  font-size: 28px;
  line-height: 45px;
  letter-spacing: 1.8px;
  text-align: center;
  white-space: nowrap;
`;

const BottomBar = styled.div`
  display: flex;
  align-items: flex-start;
  gap: 24px;
  height: 245px;
  padding: 47px 48px 0 36px;
`;
const ShortcutGroup = styled.div`
  display: flex;
  flex: none;
  width: 405px;
  margin-right: -12px;
  padding-top: 12px;
`;
const Shortcut = styled.div`
  display: flex;
  flex: none;
  flex-direction: column;
  align-items: center;
  gap: 17px;
  width: 135px;
  font-size: 29px;
  line-height: 36px;
  color: #111;
`;
const ShortcutIcon = styled.div`
  display: flex;
  align-items: center;
  justify-content: center;
  height: 54px;
`;
const TradeButton = styled.div<{ $color: string }>`
  display: flex;
  align-items: center;
  justify-content: center;
  flex: 1;
  height: 131px;
  padding-bottom: 5px;
  border-radius: 66px;
  background: ${(p) => p.$color};
  color: #fff;
  font-size: 46px;
  font-weight: 700;
`;
const HomeBar = styled.div`
  width: 404px;
  height: 12px;
  margin-left: 375px;
  border-radius: 6px;
  background: #606060;
`;
